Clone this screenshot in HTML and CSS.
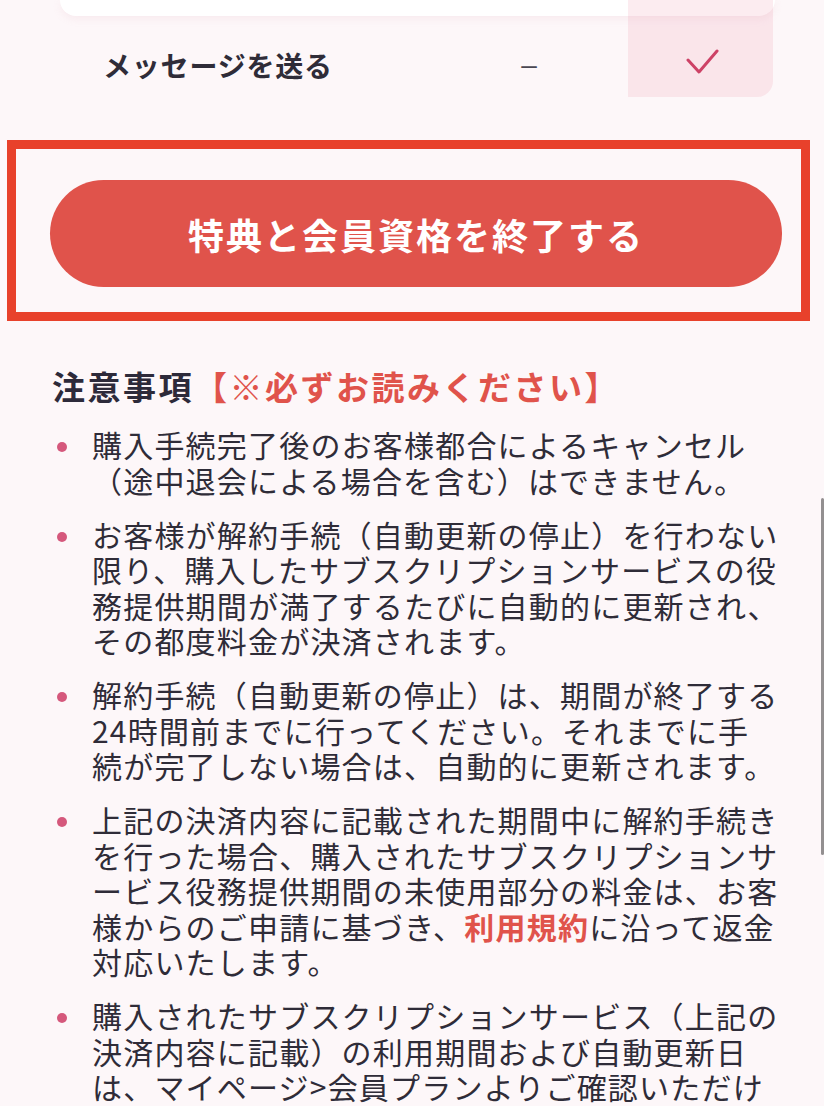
FILE: index.html
```html
<!DOCTYPE html>
<html lang="ja">
<head>
  <meta charset="UTF-8" />
  <meta name="viewport" content="width=device-width, initial-scale=1.0"/>
  <title>会員資格の終了</title>
  <link rel="stylesheet" href="styles.css">
</head>
<body>
  <div class="scroll-indicator"></div>

  <section class="plan-table">
    <div class="plan-row plan-row-alt"></div>
    <div class="plan-row">
      <span class="feature">メッセージを送る</span>
      <span class="free">–</span>
      <span class="premium">
        <svg width="34" height="26" viewBox="0 0 34 26"><polyline points="2,11 13,23 31,2" /></svg>
      </span>
    </div>
    <div class="premium-col"></div>
  </section>

  <div class="highlight">
    <button class="quit-btn">特典と会員資格を終了する</button>
  </div>

  <section class="notes">
    <h2>注意事項<span class="must">【※必ずお読みください】</span></h2>
    <ul>
      <li><p>購入手続完了後のお客様都合によるキャンセル（途中退会による場合を含む）はできません。</p></li>
      <li><p>お客様が解約手続（自動更新の停止）を行わない限り、購入したサブスクリプションサービスの役務提供期間が満了するたびに自動的に更新され、その都度料金が決済されます。</p></li>
      <li><p>解約手続（自動更新の停止）は、期間が終了する24時間前までに行ってください。それまでに手続が完了しない場合は、自動的に更新されます。</p></li>
      <li><p>上記の決済内容に記載された期間中に解約手続きを行った場合、購入されたサブスクリプションサービス役務提供期間の未使用部分の料金は、お客様からのご申請に基づき、<a href="#" class="terms">利用規約</a>に沿って返金対応いたします。</p></li>
      <li><p>購入されたサブスクリプションサービス（上記の決済内容に記載）の利用期間および自動更新日は、マイページ&gt;会員プランよりご確認いただけます。</p></li>
    </ul>
  </section>
</body>
</html>
```

FILE: styles.css
```css
* { box-sizing: border-box; }

body {
  margin: 0;
  font-family: "Noto Sans CJK JP", "Noto Sans", sans-serif;
  background-color: #fdf7f9;
  color: #2f2c38;
  overflow: hidden;
}

/* スクロールバー */
.scroll-indicator {
  position: fixed;
  top: 498px;
  right: 0;
  width: 3px;
  height: 357px;
  border-radius: 2px;
  background: rgba(0,0,0,0.42);
}

/* プラン比較表 */
.plan-table {
  position: relative;
  margin: 0 49px 0 60px;
}

.plan-row {
  display: grid;
  grid-template-columns: 1fr 96px 145px;
  column-gap: 48px;
  align-items: center;
  height: 81px;
  padding-top: 17px;
}

.plan-row-alt {
  height: 16px;
  padding: 0;
  background: white;
  border-radius: 0 0 16px 16px;
  box-shadow: 0 3px 8px rgba(210,150,165,0.12);
}

.feature {
  padding-left: 43px;
  font-size: 28px;
  font-weight: bold;
  letter-spacing: 0.8px;
  line-height: 32px;
}

.free {
  padding-right: 10px;
  text-align: center;
  font-family: "Liberation Sans", sans-serif;
  font-size: 28px;
  color: #4a4752;
}

.premium {
  display: flex;
  justify-content: center;
}

.premium svg {
  margin-bottom: 6px;
}

.premium polyline {
  fill: none;
  stroke: #c93a5f;
  stroke-width: 3;
  stroke-linecap: round;
  stroke-linejoin: round;
}

.premium-col {
  position: absolute;
  top: 0;
  right: 2px;
  width: 145px;
  height: 97px;
  background: rgba(236,120,150,0.14);
  border-bottom-right-radius: 16px;
  pointer-events: none;
}

/* 終了ボタン */
.highlight {
  width: 803px;
  margin: 43px 0 0 7px;
  padding: 31px 19px 25px 34px;
  border: 9px solid #e8412b;
}

.quit-btn {
  display: block;
  width: 100%;
  height: 107px;
  border: none;
  border-radius: 54px;
  background-color: #e0534b;
  color: white;
  font-family: inherit;
  font-size: 36px;
  font-weight: bold;
  letter-spacing: 2px;
  cursor: pointer;
}

/* 注意事項 */
.notes {
  padding: 0 44px 0 52px;
}

.notes h2 {
  margin: 45px 0 21px;
  font-size: 33px;
  line-height: 40px;
  letter-spacing: 2.5px;
  color: #2d2a3a;
}

.notes .must {
  color: #e0534b;
}

.notes ul {
  list-style: none;
  margin: 0;
  padding: 0;
}

.notes li {
  display: flex;
  margin-bottom: 18.5px;
}

.notes li::before {
  content: "";
  flex: 0 0 10px;
  height: 10px;
  margin: 15px 25px 0 5px;
  border-radius: 50%;
  background: #d5587c;
}

.notes p {
  flex: 1;
  margin: 0;
  font-size: 30px;
  line-height: 35.5px;
  letter-spacing: 1.2px;
}

.terms {
  color: #e0534b;
  font-weight: bold;
  text-decoration: none;
}
```
